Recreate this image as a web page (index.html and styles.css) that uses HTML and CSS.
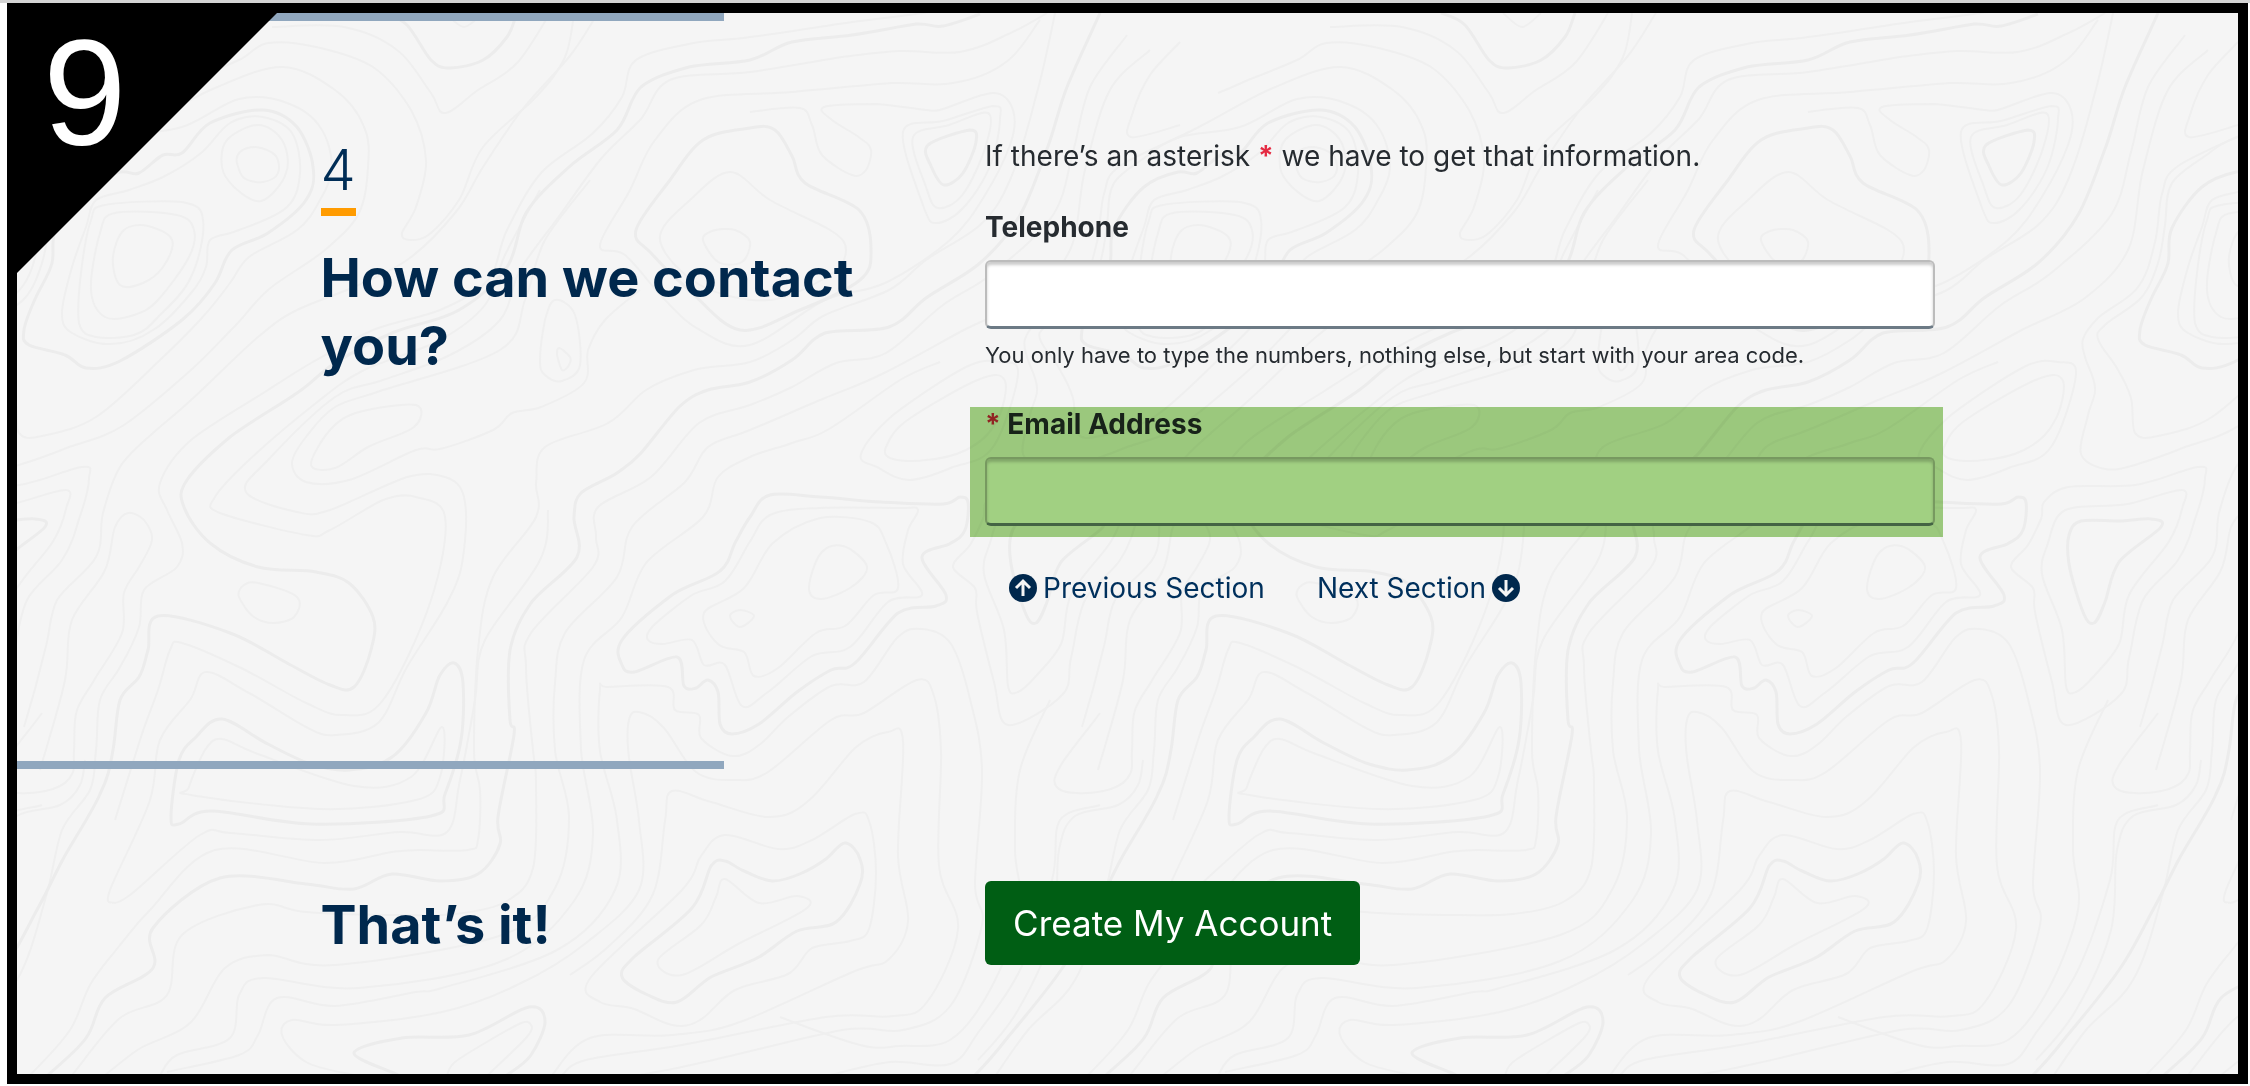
FILE: index.html
```html
<!DOCTYPE html>
<html lang="en">
<head>
    <meta charset="UTF-8">
    <meta name="viewport" content="width=device-width, initial-scale=1.0">
    <title>Create My Account</title>
    <link rel="stylesheet" href="styles.css">
</head>
<body>
    <div class="frame">
        <svg class="contours" aria-hidden="true"></svg>
        <div class="corner"><span>9</span></div>

        <form class="form">
            <section class="section contact">
                <div class="bar"></div>
                <div class="row">
                    <div class="heading">
                        <span class="step">4</span>
                        <h2>How can we contact you?</h2>
                    </div>
                    <div class="fields">
                        <p class="intro">If there’s an asterisk <span class="required">*</span> we have to get that information.</p>
                        <div class="field">
                            <label for="telephone">Telephone</label>
                            <input type="tel" id="telephone" aria-describedby="telephone-help">
                            <p class="help" id="telephone-help">You only have to type the numbers, nothing else, but start with your area code.</p>
                        </div>
                        <div class="field highlight">
                            <label for="email"><span class="required">*</span> Email Address</label>
                            <input type="email" id="email" required>
                        </div>
                        <nav class="section-nav">
                            <a href="#previous">
                                <svg class="icon" viewBox="0 0 28 28"><circle cx="14" cy="14" r="14"/><path d="M14 22V7M7 14l7-7 7 7"/></svg>
                                Previous Section
                            </a>
                            <a href="#next">
                                Next Section
                                <svg class="icon" viewBox="0 0 28 28"><circle cx="14" cy="14" r="14"/><path d="M14 6v15M7 14l7 7 7-7"/></svg>
                            </a>
                        </nav>
                    </div>
                </div>
            </section>

            <section class="section finish">
                <div class="bar"></div>
                <div class="row">
                    <h2>That’s it!</h2>
                    <div><button type="submit" class="submit">Create My Account</button></div>
                </div>
            </section>
        </form>
    </div>
    <script src="contours.js"></script>
</body>
</html>
```

FILE: styles.css
```css
* {
    box-sizing: border-box;
}
body {
    margin: 0;
    border-top: 3px solid #d4d4d4;
    background-color: #fff;
    color: #262b30;
    font-family: "Inter", "Liberation Sans", sans-serif;
    font-size: 28px;
}
h2, p {
    margin: 0;
}
.frame {
    position: relative;
    min-height: calc(100vh - 5px);
    margin: 0 2px 2px 7px;
    border: 10px solid #000;
    background-color: #f5f5f5;
    overflow: hidden;
}

/* topographic background */
.contours {
    position: absolute;
    top: 0;
    left: 0;
    width: 100%;
    height: 100%;
    fill: none;
    stroke: #efefef;
    stroke-width: 2;
}
.contours .index-line {
    stroke: #ececec;
    stroke-width: 3;
}

/* numbered corner */
.corner {
    position: absolute;
    top: 0;
    left: 0;
    z-index: 2;
    width: 260px;
    height: 260px;
    padding: 10px 26px;
    background-color: #000;
    clip-path: polygon(0 0, 100% 0, 0 100%);
    color: #fff;
    font-family: "Liberation Sans", Arial, sans-serif;
    font-size: 150px;
    line-height: 140px;
}

.form {
    position: relative;
}
.bar {
    width: 32%;
    max-width: 707px;
    height: 8px;
    background-color: #90a7be;
}
.row {
    display: grid;
    grid-template-columns: 7fr 10fr;
    max-width: 1614px;
    margin: 0 auto;
}
.contact .row {
    padding: 113px 0 151px;
}
.finish .row {
    align-items: center;
    padding: 112px 0 98px;
}
.finish h2 {
    padding-top: 4px;
}
.heading {
    padding: 6px 96px 0 0;
}
.step {
    display: inline-block;
    margin-bottom: 28px;
    padding-bottom: 8px;
    border-bottom: 8px solid #ff9b00;
    color: #002d56;
    font-size: 56px;
    font-weight: 300;
    line-height: 60px;
}
h2 {
    color: #00284d;
    font-size: 54px;
    font-weight: 700;
    line-height: 68px;
}
.intro {
    margin-bottom: 32px;
    line-height: 44px;
}
.required {
    color: #e52a42;
    font-weight: 700;
}
.field label {
    display: block;
    margin-bottom: 16px;
    font-weight: 700;
    line-height: 34px;
}
.field input {
    display: block;
    width: 100%;
    height: 69px;
    padding: 8px 20px;
    border: 2px solid #bcbcbc;
    border-bottom: 3px solid #6c7a85;
    border-radius: 6px;
    background-color: #fff;
    box-shadow: inset 0 3px 3px #ccc;
    font: inherit;
}
.help {
    margin: 8px 0 34px;
    font-size: 22px;
    line-height: 36px;
}
.highlight {
    position: relative;
    margin: 0 -8px 0 -15px;
    padding: 0 8px 11px 15px;
}
.highlight::after {
    content: "";
    position: absolute;
    inset: 0;
    background-color: #a1d082;
    mix-blend-mode: multiply;
    pointer-events: none;
}
.section-nav {
    display: flex;
    gap: 52px;
    margin-top: 29px;
    padding-left: 24px;
    line-height: 44px;
}
.section-nav a {
    display: flex;
    align-items: center;
    gap: 6px;
    color: #00305c;
    text-decoration: none;
}
.icon {
    width: 28px;
    height: 28px;
    fill: #00284d;
}
.icon path {
    fill: none;
    stroke: #f5f5f5;
    stroke-width: 3;
}
.submit {
    padding: 20px 28px;
    border: 0;
    border-radius: 6px;
    background-color: #005e14;
    color: #fff;
    font: inherit;
    font-size: 35px;
    line-height: 44px;
    cursor: pointer;
}
```

FILE: contours.js
```js
// Contour lines of the background tile, x y pairs. The tile repeats every 1058px.
const TILE = 1058;
const SHIFT_X = -17;
const SHIFT_Y = -13;

// closed thin
const rings = [
    '237 163 240 152 256 147 275 155 278 173 263 182 244 178',
    '222 167 227 140 258 125 282 140 286 173 261 201 234 187',
    '129 190 163 177 201 153 230 123 263 117 292 133 300 173 287 207 239 230 210 240 206 267 191 293 153 330 110 344 72 333 62 313 72 267 86 227 96 200',
    '113 257 124 230 148 226 172 240 163 267 143 283 120 285',
    '91 290 100 233 115 213 177 215 194 230 189 257 158 300 134 315 105 317',
    '81 273 91 220 105 205 182 202 203 220 191 277 158 317 134 335 96 337 79 323',
    '122 137 182 127 239 99 287 103 320 127 332 167 320 200 297 230 249 257 230 283 200 320 160 360 96 417 42 436 19 433 15 398 2 370 -18 339 -11 325 25 298 42 263 49 225 56 183 89 156',
    '139 128 215 88 282 67 335 90 364 127 368 167 359 213 325 250 268 290 234 327 191 370 124 425 69 447 22 464 -11 469 -35 454 -28 415 -21 388 -31 357 -33 339 -18 318 22 287 39 242 46 194 62 166',
    '984 574 990 543 1000 516 1020 507 1070 504 1124 490 1124 509 1110 543 1071 595 1061 644 1037 675 1018 692 1008 686 1004 630',
    '983 519 986 502 1010 487 1077 485 1140 467 1147 478 1137 519 1120 560 1085 600 1071 658 1062 695 1008 725 994 682 977 612 975 588 953 567 970 545',
    '809 588 821 553 843 546 867 567 850 588 821 599',
    '730 616 740 610 754 616 740 627',
    '773 543 744 588 704 613 718 644 744 652 754 676 778 668 816 633 845 626 874 595 898 588 886 543 870 522 820 518',
    '749 543 725 581 692 595 653 626 648 640 663 644 692 640 704 665 725 665 742 706 768 692 812 656 850 647 888 602 922 595 903 564 908 530 918 510 900 508 820 508 770 515',
    '725 835 778 849 812 840 855 814 869 821 876 873 869 929 850 941 812 948 788 974 735 990 700 1020 672 1025 634 1009 600 1002 591 977 682 890 701 856',
    '725 879 759 903 797 896 807 908 740 943 682 975 658 960 701 925 716 897',
    '222 739 258 754 354 786 411 777 442 727 440 777 416 800 320 809 191 795 189 787 205 750',
    '359 412 416 405 414 427 368 447 335 468 311 465 330 430',
    '557 355 559 348 570 357 569 365 562 370',
    '540 360 545 320 555 300 575 315 580 365 562 381 545 375',
    '239 597 244 585 258 583 297 597 294 617 273 623 254 617',
    '913 137 949 125 988 113 986 145 963 194 938 208 926 187',
    '903 132 943 121 993 106 1000 118 990 166 963 208 936 223 924 208',
    '886 447 909 419 980 379 1005 381 996 422 966 450 926 460 893 459',
    '861 454 893 415 966 367 1000 362 1018 374 993 447 953 467 909 480 877 467',
    '660 240 690 200 730 172 770 200 830 230 846 250 830 275 770 300 700 285',
    '703 240 712 231 735 230 750 242 742 262 718 262'
];

// closed thick
const indexRings = [
    '120 172 139 173 163 155 182 153 210 123 263 110 297 127 313 167 306 200 268 233 232 250 215 283 182 320 120 361 86 368 65 355 29 345 24 330 36 297 52 263 56 228 86 187',
    '1011 564 1025 612 1036 623 1047 602 1061 562 1103 527 1093 519 1060 521 1023 521 1011 535',
    '735 543 720 571 672 595 622 640 622 665 634 672 677 657 684 686 696 688 708 680 718 692 720 724 732 734 759 724 797 692 831 670 855 663 898 613 936 606 946 595 922 557 951 543 965 530 968 502 960 497 943 504 881 502 820 497 770 495 750 517',
    '725 861 744 871 773 881 802 873 826 859 845 843 860 859 860 884 836 922 797 931 759 957 711 977 677 1002 648 995 622 977 634 957 692 908 711 866',
    '179 824 171 817 179 760 196 737 222 719 268 744 311 764 349 770 392 757 426 713 440 675 454 663 463 683 461 740 445 794 431 816 311 824 211 811',
    '750 128 703 140 670 180 636 230 651 253 689 290 740 330 800 310 860 280 871 250 859 210 805 183 792 156 775 130',
    '928 145 970 130 976 142 963 173 944 185 931 166'
];

// open thin
const lines = [
    '160 93 190 80 239 60 268 43 316 47 373 67 411 110 426 160 416 207 402 233 411 240 431 233 459 200 483 147 536 97 565 57 574 13',
    '272 27 344 27 397 50 431 93 445 113 478 90 517 63 550 13',
    '445 13 464 27 483 13',
    '598 13 569 57 522 110 483 167 455 213 407 260 354 287 297 310 258 337 191 400 153 433 120 467 103 513 96 557 57 600 45 650 24 727',
    '980 5 916 14 852 22 750 37 694 43 636 60 622 97 593 133 541 173 507 230 488 280 440 310 373 330 311 363 268 390 191 440 160 483 167 510 182 543 177 567 144 590 139 627 120 667 100 700 96 750 90 790 62 830 45 900 17 980 -30 1030 -62 1075',
    '40 770 65 680 72 620 105 570 115 527 128 513 144 520 152 540 139 567 124 593 122 633 96 677 77 710 74 750 72 774 53 789 19 793 -2 786 3 765 42 713',
    '85 760 80 785 60 805 17 816 1 850 -5 930 -40 1010 -80 1060',
    '167 1072 239 1055 258 1035 277 998 335 1006 416 992 442 988 557 950 615 890 617 821 600 751 600 689 608 687 668 687 675 710 699 715 701 738 732 756 759 745 788 717 831 686 864 682 898 637 922 629 951 644 970 699 982 769 975 884 982 925 951 1005 903 1030 842 1030 700 1063 640 1075',
    '354 1075 306 1062 282 1035 292 1020 335 1025 442 1012 519 984 586 943 639 890 639 821 629 758 629 720 639 712 663 727 696 772 735 780 768 772 831 720 864 713 917 680 934 696 941 751 939 866 958 929 927 1002 893 1016 826 1017 682 1045 586 1060 562 1075',
    '552 1075 590 1038 672 1035 740 1022 855 971 888 960 908 922 898 856 903 741 888 732 855 748 807 802 768 817 711 802 672 791 665 821 653 894 610 945 570 975',
    '112 903 130 895 200 835 230 833 320 840 400 832 447 832 460 780 475 700 485 640 540 560 548 510',
    '112 903 110 890 150 800 160 740 190 700 206 672 249 693 306 727 335 735 378 723 407 667 450 597 464 550 464 497 445 477 407 477 330 510 297 512 246 492 268 460 335 397 383 380 450 355 500 320 520 270 560 215 600 160 640 120 670 80 750 72 842 57 899 51 960 52 1006 35 1047 13',
    '115 820 140 740 158 690 170 650 182 643 239 667 306 703 344 715 383 700 431 600 445 517 416 497 383 500 330 530 306 535 220 513 215 497 249 460 316 403 364 370 440 340 485 305 505 255 540 190',
    '640 290 605 320 588 350 584 383 541 407 512 413 493 430 440 449 416 450 349 480 306 482 292 463 306 437 335 407 383 390 500 350 525 300 545 240 590 180',
    '1055 13 1035 100 1010 180 980 225 926 260 889 290 825 315 792 340 750 362 694 370 646 390 608 423 545 447 536 483 536 517 493 577 478 650 474 750 480 790 478 840 468 850 420 850 392 852 325 863 215 850 150 910 120 945 90 985 70 1030 30 1075',
    '1127 35 1090 87 1073 152 1053 215 993 273 943 305 886 353 836 363 792 387 750 405 699 423 651 477 598 507 596 537 593 567 531 633 526 667 533 750 536 784 533 868 507 901 455 914 400 915 306 912 258 905 182 935 167 995 120 1018 72 1075',
    '1150 50 1110 90 1085 170 1070 250 1027 298 960 332 882 374 825 398 750 430 708 447 684 483 632 527 617 577 565 633 555 683 555 750 569 817 555 888 502 935 335 965 268 955 225 968 191 1022 139 1049 105 1075',
    '940 362 900 380 829 429 792 443 750 457 718 477 703 517 646 563 622 617 584 660 581 750 593 834 574 901 502 961 359 988 263 978 239 995 230 1038 177 1055 160 1075',
    '447 1075 459 1059 517 1025 531 1025 526 1038 488 1075',
    '1040 20 1006 62 953 83 892 83 792 92 700 100 655 140 630 190 600 245 625 255 665 300 700 330 750 345 825 300 885 283 950 240 985 195 1010 145 1013 110 993 93 943 109 926 110 876 104 824 107 832 120 860 138 871 150 866 170 852 175 822 155 812 125 800 108 750 112',
    '1180 125 1131 137 1132 115 1150 75 1180 42',
    '780 1017 860 1045 900 1046 950 1040 990 990 1020 910 1015 850 1020 770 1050 700',
    '830 1075 890 1062 950 1064 980 1030 1020 970 1052 880 1060 820 1100 805'
];

// open thick
const indexLines = [
    '383 13 407 25 431 60 450 68 483 60 507 37 517 13',
    '980 14 943 26 916 24 852 35 792 42 750 60 689 67 641 87 617 130 569 167 526 213 507 267 459 310 392 333 335 363 297 393 230 437 187 480 184 507 210 543 258 567 316 572 349 583 373 617 371 650 354 687 330 685 287 663 230 633 158 616 148 650 139 677 120 700 113 750 100 794 62 861 38 908 3 970 -50 1037 -83 1075',
    '1100 13 1067 87 1047 149 1020 215 980 263 926 298 889 327 825 333 792 360 750 382 708 390 679 407 641 453 617 473 581 493 574 517 577 557 531 603 510 650 510 720 514 735 498 817 500 844 478 874 440 881 392 874 354 889 306 884 220 878 153 928 153 968 105 998 86 1038 48 1075',
    '398 1075 354 1053 402 1038 469 1035 529 1007 545 1022 531 1055 507 1075'
];

// Smooth curve through all the points (Catmull-Rom to Bezier)
function curve(text, closed) {
    const n = text.split(' ').map(Number);
    const pts = [];
    for (let i = 0; i < n.length; i += 2) {
        pts.push([n[i] + SHIFT_X, n[i + 1] + SHIFT_Y]);
    }
    const count = pts.length;
    const at = i => closed ? pts[(i + count) % count] : pts[Math.max(0, Math.min(count - 1, i))];
    let d = 'M' + pts[0];
    for (let i = 0; i < (closed ? count : count - 1); i++) {
        const [a, b, c, e] = [at(i - 1), at(i), at(i + 1), at(i + 2)];
        d += 'C' + [
            b[0] + (c[0] - a[0]) / 6, b[1] + (c[1] - a[1]) / 6,
            c[0] - (e[0] - b[0]) / 6, c[1] - (e[1] - b[1]) / 6,
            c[0], c[1]
        ].map(Math.round);
    }
    return d;
}

function draw(list, closed, className) {
    return list.map(text => `<path class="${className}" d="${curve(text, closed)}"/>`).join('');
}

const svg = document.querySelector('.contours');
const tile = draw(rings, true, 'line') + draw(lines, false, 'line')
    + draw(indexRings, true, 'index-line') + draw(indexLines, false, 'index-line');
let html = `<g id="tile">${tile}</g>`;
for (let x = -TILE; x <= window.innerWidth; x += TILE) {
    if (x !== 0) html += `<use href="#tile" x="${x}"/>`;
}
svg.innerHTML = html;
```
